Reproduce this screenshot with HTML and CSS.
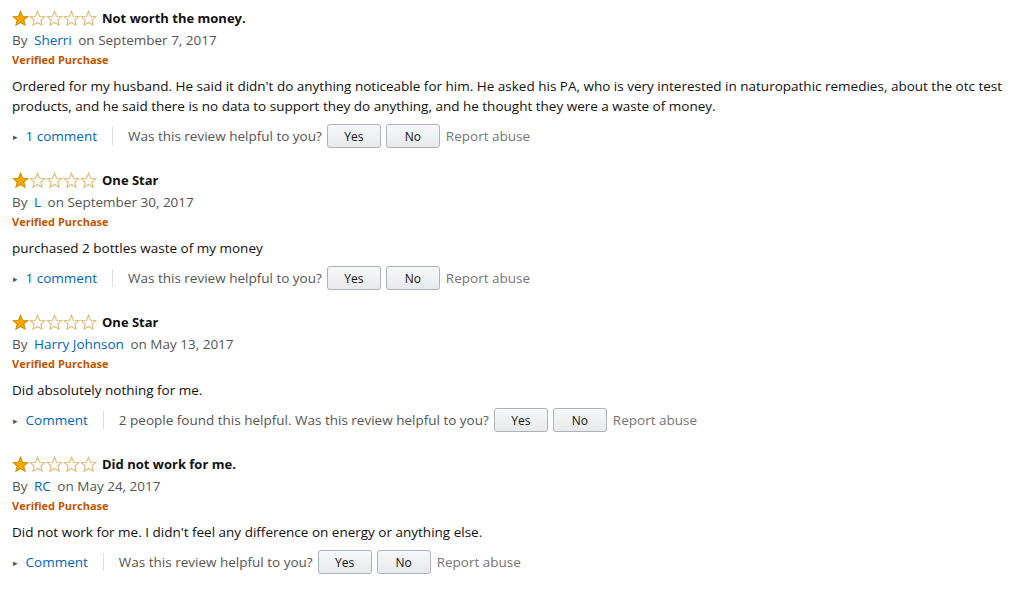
FILE: index.html
```html
<!DOCTYPE html>
<html lang="en">

<head>
    <meta charset="UTF-8">
    <title>Customer Reviews</title>
    <link rel="stylesheet" href="styles.css">
</head>

<body>
    <svg width="0" height="0" class="defs">
        <defs>
            <path id="star" d="M8 1.2l1.9 4.6 5 .4-3.8 3.2 1.2 4.9L8 11.7l-4.3 2.6 1.2-4.9L1.1 6.2l5-.4z" />
        </defs>
    </svg>

    <div class="reviews">
        <!-- Review 1 -->
        <div class="review">
            <div class="review-title">
                <span class="stars">
                    <svg class="star full" viewBox="0 0 16 16"><use href="#star" /></svg>
                    <svg class="star" viewBox="0 0 16 16"><use href="#star" /></svg>
                    <svg class="star" viewBox="0 0 16 16"><use href="#star" /></svg>
                    <svg class="star" viewBox="0 0 16 16"><use href="#star" /></svg>
                    <svg class="star" viewBox="0 0 16 16"><use href="#star" /></svg>
                </span>
                <span class="title">Not worth the money.</span>
            </div>
            <div class="byline">By <a href="#">Sherri</a> on September 7, 2017</div>
            <div class="verified">Verified Purchase</div>
            <p class="body">Ordered for my husband. He said it didn't do anything noticeable for him. He asked his PA, who is very interested in naturopathic remedies, about the otc test products, and he said there is no data to support they do anything, and he thought they were a waste of money.</p>
            <div class="actions">
                <a href="#" class="comment-link"><span class="caret">&#9656;</span> 1 comment</a>
                <span class="divider"></span>
                <span class="helpful">Was this review helpful to you?</span>
                <button class="vote">Yes</button>
                <button class="vote">No</button>
                <span class="report">Report abuse</span>
            </div>
        </div>

        <!-- Review 2 -->
        <div class="review">
            <div class="review-title">
                <span class="stars">
                    <svg class="star full" viewBox="0 0 16 16"><use href="#star" /></svg>
                    <svg class="star" viewBox="0 0 16 16"><use href="#star" /></svg>
                    <svg class="star" viewBox="0 0 16 16"><use href="#star" /></svg>
                    <svg class="star" viewBox="0 0 16 16"><use href="#star" /></svg>
                    <svg class="star" viewBox="0 0 16 16"><use href="#star" /></svg>
                </span>
                <span class="title">One Star</span>
            </div>
            <div class="byline">By <a href="#">L</a> on September 30, 2017</div>
            <div class="verified">Verified Purchase</div>
            <p class="body">purchased 2 bottles waste of my money</p>
            <div class="actions">
                <a href="#" class="comment-link"><span class="caret">&#9656;</span> 1 comment</a>
                <span class="divider"></span>
                <span class="helpful">Was this review helpful to you?</span>
                <button class="vote">Yes</button>
                <button class="vote">No</button>
                <span class="report">Report abuse</span>
            </div>
        </div>

        <!-- Review 3 -->
        <div class="review">
            <div class="review-title">
                <span class="stars">
                    <svg class="star full" viewBox="0 0 16 16"><use href="#star" /></svg>
                    <svg class="star" viewBox="0 0 16 16"><use href="#star" /></svg>
                    <svg class="star" viewBox="0 0 16 16"><use href="#star" /></svg>
                    <svg class="star" viewBox="0 0 16 16"><use href="#star" /></svg>
                    <svg class="star" viewBox="0 0 16 16"><use href="#star" /></svg>
                </span>
                <span class="title">One Star</span>
            </div>
            <div class="byline">By <a href="#">Harry Johnson</a> on May 13, 2017</div>
            <div class="verified">Verified Purchase</div>
            <p class="body">Did absolutely nothing for me.</p>
            <div class="actions">
                <a href="#" class="comment-link"><span class="caret">&#9656;</span> Comment</a>
                <span class="divider"></span>
                <span class="helpful">2 people found this helpful. Was this review helpful to you?</span>
                <button class="vote">Yes</button>
                <button class="vote">No</button>
                <span class="report">Report abuse</span>
            </div>
        </div>

        <!-- Review 4 -->
        <div class="review">
            <div class="review-title">
                <span class="stars">
                    <svg class="star full" viewBox="0 0 16 16"><use href="#star" /></svg>
                    <svg class="star" viewBox="0 0 16 16"><use href="#star" /></svg>
                    <svg class="star" viewBox="0 0 16 16"><use href="#star" /></svg>
                    <svg class="star" viewBox="0 0 16 16"><use href="#star" /></svg>
                    <svg class="star" viewBox="0 0 16 16"><use href="#star" /></svg>
                </span>
                <span class="title">Did not work for me.</span>
            </div>
            <div class="byline">By <a href="#">RC</a> on May 24, 2017</div>
            <div class="verified">Verified Purchase</div>
            <p class="body">Did not work for me. I didn't feel any difference on energy or anything else.</p>
            <div class="actions">
                <a href="#" class="comment-link"><span class="caret">&#9656;</span> Comment</a>
                <span class="divider"></span>
                <span class="helpful">Was this review helpful to you?</span>
                <button class="vote">Yes</button>
                <button class="vote">No</button>
                <span class="report">Report abuse</span>
            </div>
        </div>
    </div>
</body>

</html>
```

FILE: styles.css
```css
body {
    font-family: "Open Sans", Arial, sans-serif;
    font-size: 13.5px;
    margin: 0;
    padding: 0;
    background-color: #fff;
    color: #111;
}

.defs {
    position: absolute;
}

.reviews {
    padding: 8px 0 0 12px;
}

.review {
    margin-bottom: 21px;
}

.review-title {
    display: flex;
    align-items: center;
    height: 20px;
}

.stars {
    display: flex;
    margin-right: 5px;
}

.star {
    width: 17px;
    height: 17px;
    fill: #fff;
    stroke: #e0b973;
    stroke-width: 1;
}

.star.full {
    fill: #f7a800;
    stroke: #d38e00;
}

.title {
    font-size: 13px;
    font-weight: bold;
    color: #111;
}

.byline {
    margin-top: 2px;
    line-height: 20px;
    color: #555;
}

.byline a {
    color: #0066c0;
    text-decoration: none;
    margin: 0 3px;
}

.verified {
    line-height: 20px;
    font-size: 11px;
    font-weight: bold;
    color: #c45500;
}

.body {
    margin: 6px 0 0;
    line-height: 20px;
    color: #111;
}

.actions {
    display: flex;
    align-items: center;
    margin-top: 7px;
    height: 26px;
    padding-left: 1px;
    color: #555;
}

.comment-link {
    color: #0066c0;
    text-decoration: none;
}

.caret {
    color: #555;
    font-size: 9px;
    margin-right: 4px;
    vertical-align: 1px;
}

.divider {
    width: 1px;
    height: 18px;
    background-color: #ddd;
    margin: 0 15px;
}

.vote {
    font-family: inherit;
    font-size: 12px;
    width: 54px;
    height: 24px;
    margin-left: 5px;
    border: 1px solid #adb1b8;
    border-radius: 3px;
    background: linear-gradient(#f7f8fa, #e7e9ec);
    color: #111;
    cursor: pointer;
}

.report {
    margin-left: 6px;
    color: #767676;
}
```
